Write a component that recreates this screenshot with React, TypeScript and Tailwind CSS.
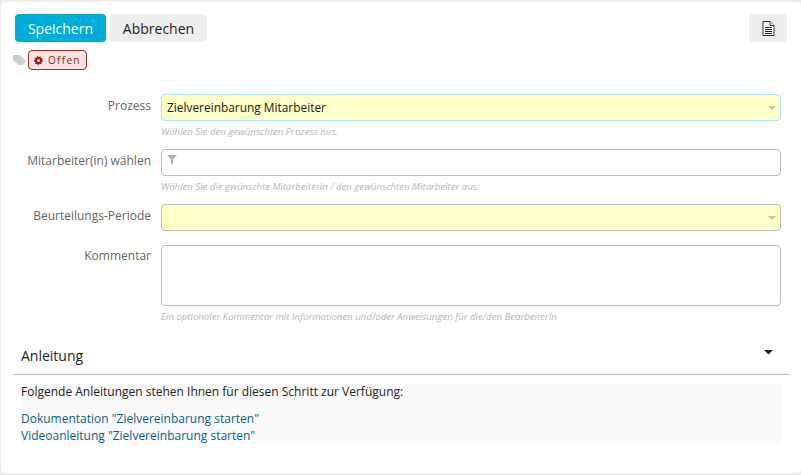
import React from "react";

const Caret = ({ className, w = 10 }: { className: string; w?: number }) => (
  <svg className={className} width={w} height={w / 2} viewBox="0 0 10 5">
    <path d="M0 0h10L5 5z" fill="currentColor" />
  </svg>
);

const Row = ({ label, hint, children, labelTop = "pt-[2px]" }: { label: string; hint?: string; children: React.ReactNode; labelTop?: string }) => (
  <div className="flex">
    <div className={`w-[138px] text-right text-[12px] leading-[20px] text-[#666] ${labelTop}`}>{label}</div>
    <div className="ml-[10px] w-[620px]">
      {children}
      {hint && <p className="mt-[4px] h-[14px] text-[9.6px] leading-[14px] italic text-[#b5b5b5]">{hint}</p>}
    </div>
  </div>
);

const SelectBox = ({ value, active }: { value?: string; active?: boolean }) => (
  <div className={`flex h-[27px] items-center justify-between rounded-[4px] border bg-[#ffffc8] pl-[5px] pr-[4px] text-[11.9px] text-[#222] ${active ? "border-[#a5e3f7]" : "border-[#bbb]"}`}>
    <span>{value}</span>
    <Caret w={8} className="text-[#c4c4a4]" />
  </div>
);

export default function App() {
  return (
    <div className="h-[475px] w-[801px] overflow-hidden bg-[#ececec] pl-[1px] pt-[2px] font-['Open_Sans',sans-serif]">
      <div className="h-[471px] w-[800px] rounded-[4px] bg-white pt-[12px]">
        <div className="flex pl-[14px] pr-[14px]">
          <button className="h-[28px] w-[91px] rounded-[4px] bg-[#00acd9] text-[14px] text-white">Speichern</button>
          <button className="ml-[4px] h-[28px] w-[97px] rounded-[4px] bg-[#eee] text-[14px] text-[#222]">Abbrechen</button>
          <button className="ml-auto flex h-[28px] w-[38px] items-center justify-center rounded-[4px] bg-[#eee]">
            <svg width="13" height="15" viewBox="0 0 13 15">
              <path d="M1 .5h7l4 4v10H1z" fill="#fff" stroke="#333" />
              <path d="M8 .5v4h4" fill="#eee" stroke="#333" />
              <path d="M3 6.500h7M3 8.500h7M3 10.500h7M3 12.500h7" stroke="#222" />
            </svg>
          </button>
        </div>
        <div className="mt-[8px] flex h-[20px] items-center pl-[12px]">
          <svg width="13" height="11" viewBox="0 0 13 11">
            <path d="M0 0h5l6 6-4.500 4.500L0 5zM7 0l6 6-4 4.500-1-1 3-3.500L5.500 0z" fill="#ccc" />
          </svg>
          <div className="ml-[2px] flex h-[20px] w-[59px] items-center rounded-[4px] border border-[#a5281b] bg-[#fbe3e0] pl-[5px]">
            <svg width="9" height="9" viewBox="0 0 10 10">
              <circle cx="5" cy="5" r="2.800" fill="none" stroke="#8a1f11" strokeWidth="2.200" />
              <circle cx="5" cy="5" r="4.200" fill="none" stroke="#8a1f11" strokeWidth="1.400" strokeDasharray="1.500 1.400" />
            </svg>
            <span className="ml-[5px] text-[10px] leading-none tracking-[1.3px] text-[#7a2a20]">Offen</span>
          </div>
        </div>
        <div className="mt-[24px] flex flex-col pl-[12px]">
          <div className="h-[55px]">
            <Row label="Prozess" hint="Wählen Sie den gewünschten Prozess aus.">
              <SelectBox value="Zielvereinbarung Mitarbeiter" active />
            </Row>
          </div>
          <div className="h-[55px]">
            <Row label="Mitarbeiter(in) wählen" hint="Wählen Sie die gwünschte Mitarbeiterin / den gewünschten Mitarbeiter aus.">
              <div className="flex h-[27px] items-start rounded-[4px] border border-[#bbb] bg-white pl-[5px] pt-[5px]">
                <svg width="10" height="10" viewBox="0 0 10 10">
                  <path d="M0 0h10L6 4.500V10L4 8.500V4.500z" fill="#b0b0b0" />
                </svg>
              </div>
            </Row>
          </div>
          <div className="h-[41px]">
            <Row label="Beurteilungs-Periode">
              <SelectBox />
            </Row>
          </div>
          <Row label="Kommentar" labelTop="pt-[1px]" hint="Ein optionaler Kommentar mit Informationen und/oder Anweisungen für die/den BearbeiterIn">
            <div className="h-[61px] rounded-[4px] border border-[#bbb] bg-white" />
          </Row>
        </div>
        <div className="mx-[12px] mt-[13px] flex h-[38px] w-[776px] items-center justify-between border-b border-[#bbb] pl-[8px] pr-[16px] text-[14px] text-[#222]">
          <span>Anleitung</span>
          <Caret w={9} className="mb-[6px] text-[#222]" />
        </div>
        <div className="ml-[20px] mt-[8px] h-[61px] w-[760px] bg-[#fafafa] text-[12px] leading-[17px] text-[#222]">
          <p>Folgende Anleitungen stehen Ihnen für diesen Schritt zur Verfügung:</p>
          <div className="mt-[10px] text-[#0b5f8a]">
            <a className="block">Dokumentation "Zielvereinbarung starten"</a>
            <a className="block">Videoanleitung "Zielvereinbarung starten"</a>
          </div>
        </div>
      </div>
    </div>
  );
}
